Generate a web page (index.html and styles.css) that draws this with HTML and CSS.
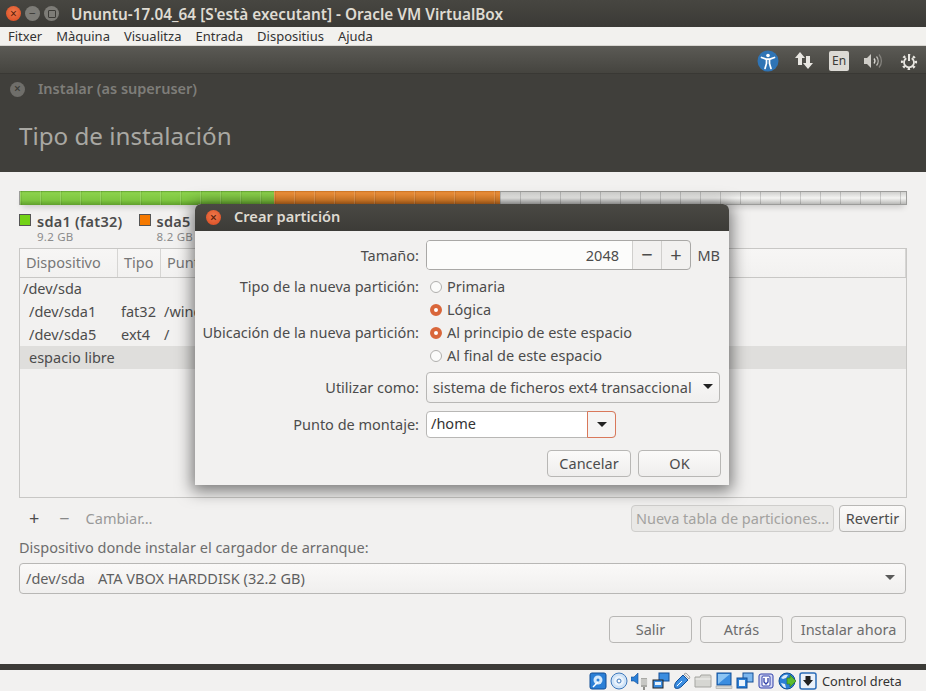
FILE: index.html
```html
<!DOCTYPE html>
<html lang="es">
<head>
    <meta charset="UTF-8">
    <title>Ununtu-17.04_64 [S'està executant] - Oracle VM VirtualBox</title>
    <link rel="stylesheet" href="styles.css">
</head>
<body>

<div class="titlebar">
    <span class="wbtn wbtn-close">&times;</span>
    <span class="wbtn wbtn-min">&minus;</span>
    <span class="wbtn wbtn-max"><i></i></span>
    <span class="titlebar-text">Ununtu-17.04_64 [S'està executant] - Oracle VM VirtualBox</span>
</div>

<div class="menubar">
    <span>Fitxer</span>
    <span>Màquina</span>
    <span>Visualitza</span>
    <span>Entrada</span>
    <span>Dispositius</span>
    <span>Ajuda</span>
</div>

<div class="panel">
    <svg class="ind" width="22" height="22" viewBox="0 0 22 22">
        <circle cx="11" cy="11" r="10.5" fill="#2f74b5"/>
        <circle cx="11" cy="5.5" r="1.8" fill="#fff"/>
        <path d="M4.5 7.5l4.5 1.6h4l4.500-1.600M9.500 9v4.500l-1.500 5M12.500 9v4.500l1.500 5" fill="none" stroke="#fff" stroke-width="1.700" stroke-linecap="round"/>
    </svg>
    <svg class="ind ind-net" width="18" height="19" viewBox="0 0 18 19">
        <path d="M5 1l5 6H7v7H3V7H0zM13 18l5-6h-3V5h-4v7H8z" fill="#e8e6e1"/>
    </svg>
    <span class="ind ind-lang">En</span>
    <svg class="ind ind-vol" width="20" height="16" viewBox="0 0 20 16">
        <path d="M1 5h3l4-4v14l-4-4H1z" fill="#cfcdc8"/>
        <path d="M11 5.500a4 4 0 0 1 0 5" fill="none" stroke="#dad8d3" stroke-width="1.300"/>
        <path d="M13.500 3.500a7 7 0 0 1 0 9" fill="none" stroke="#bdbbb6" stroke-width="1.300"/>
        <path d="M16 1.500a10 10 0 0 1 0 13" fill="none" stroke="#85837e" stroke-width="1.300"/>
    </svg>
    <svg class="ind ind-gear" width="18" height="18" viewBox="0 0 18 18">
        <circle cx="9" cy="10" r="6.900" fill="none" stroke="#e8e6e1" stroke-width="2.400" stroke-dasharray="2.400 3.020" stroke-dashoffset="1.200" transform="rotate(-90 9 10)"/>
        <path d="M6.300 6.200a5 5 0 1 0 5.400 0" fill="none" stroke="#e8e6e1" stroke-width="1.800"/>
        <path d="M9 2v7" stroke="#e8e6e1" stroke-width="2"/>
    </svg>
</div>

<div class="inst-header">
    <div class="inst-caption">
        <span class="inst-close">&times;</span>
        <span class="inst-name">Instalar (as superuser)</span>
    </div>
    <h1>Tipo de instalación</h1>
</div>

<div class="main">
    <div class="diskbar">
        <div class="seg seg-green"></div>
        <div class="seg seg-orange"></div>
        <div class="seg seg-free"></div>
    </div>

    <div class="legend">
        <div class="legend-item">
            <span class="swatch swatch-green"></span>
            <div><b>sda1 (fat32)</b><small>9.2 GB</small></div>
        </div>
        <div class="legend-item">
            <span class="swatch swatch-orange"></span>
            <div><b>sda5</b><small>8.2 GB</small></div>
        </div>
    </div>

    <div class="parts">
        <div class="parts-head">
            <span>Dispositivo</span>
            <span>Tipo</span>
            <span>Punto de montaje</span>
        </div>
        <div class="parts-row first-row"><span class="dev-root">/dev/sda</span><span></span><span></span></div>
        <div class="parts-row"><span>/dev/sda1</span><span>fat32</span><span>/windows</span></div>
        <div class="parts-row"><span>/dev/sda5</span><span>ext4</span><span>/</span></div>
        <div class="parts-row selected"><span>espacio libre</span><span></span><span></span></div>
    </div>

    <div class="tools">
        <span class="tool-plus">+</span>
        <span class="tool-minus">&minus;</span>
        <span class="tool-change">Cambiar…</span>
        <button class="btn btn-disabled btn-table">Nueva tabla de particiones...</button>
        <button class="btn btn-revert">Revertir</button>
    </div>

    <div class="boot-label">Dispositivo donde instalar el cargador de arranque:</div>
    <div class="combo boot-combo">
        <span>/dev/sda<span class="boot-disk">ATA VBOX HARDDISK (32.2 GB)</span></span>
        <i class="arrow arrow-dim"></i>
    </div>

    <div class="actions">
        <button class="btn btn-action">Salir</button>
        <button class="btn btn-action">Atrás</button>
        <button class="btn btn-install">Instalar ahora</button>
    </div>
</div>

<div class="band"></div>

<div class="statusbar">
    <svg width="18" height="18" viewBox="0 0 18 18"><rect x="1" y="1" width="16" height="16" rx="2" fill="#2b7fd6" stroke="#124e96"/><circle cx="9" cy="8" r="4.500" fill="#d3e8fb"/><circle cx="9" cy="8" r="1.500" fill="#2b7fd6"/><path d="M4 15l5-5" stroke="#fff" stroke-width="1.500"/></svg>
    <svg width="18" height="18" viewBox="0 0 18 18"><circle cx="9" cy="9" r="8" fill="#cfe3f7" stroke="#3e78bb"/><circle cx="9" cy="9" r="5" fill="#eaf3fc"/><circle cx="9" cy="9" r="2" fill="#fff" stroke="#3e78bb"/></svg>
    <svg width="18" height="18" viewBox="0 0 18 18"><path d="M0 5h3l4-4v11l-4-3H0z" fill="#2b7fd6" stroke="#124e96" stroke-width=".6"/><rect x="10" y="6" width="6" height="9" fill="#a9a9a5"/><path d="M9 8h8M9 10h8M9 12h8" stroke="#e5e5e2"/><rect x="12" y="15" width="2" height="3" fill="#8f8f8b"/></svg>
    <svg width="18" height="18" viewBox="0 0 18 18"><rect x="7" y="1" width="10" height="8" fill="#3b8de0" stroke="#124e96"/><rect x="1" y="8" width="10" height="8" fill="#3b8de0" stroke="#222"/><rect x="3" y="10" width="6" height="3" fill="#e8f2fb"/></svg>
    <svg width="18" height="18" viewBox="0 0 18 18"><path d="M2 16c-1-3 0-5 2-7l6-6 5 5-6 6c-2 2-4 3-7 2z" fill="#3b8de0" stroke="#124e96"/><path d="M11 2l2-1 4 4-1 2z" fill="#e8e8e8" stroke="#777" stroke-width=".6"/><path d="M4 14l5-5" stroke="#fff"/></svg>
    <svg width="18" height="18" viewBox="0 0 18 18"><path d="M1 5h5l1-2h9a1 1 0 0 1 1 1v11H1z" fill="#d6d6d2" stroke="#a5a5a1"/><path d="M1.500 7h15" stroke="#f2f2f0"/></svg>
    <svg width="18" height="18" viewBox="0 0 18 18"><rect x="2" y="1" width="14" height="12" fill="#3b8de0" stroke="#124e96"/><path d="M3 12V2h12z" fill="#8cc4f3"/><rect x="1" y="14" width="16" height="2.500" fill="#d9d9d6" stroke="#9a9a96" stroke-width=".5"/></svg>
    <svg width="18" height="18" viewBox="0 0 18 18"><rect x="7" y="1" width="10" height="9" fill="#7db7ee" stroke="#124e96"/><rect x="1" y="6" width="10" height="10" fill="#2b7fd6" stroke="#124e96"/><rect x="3" y="8" width="6" height="6" fill="#eaf3fc"/></svg>
    <svg width="18" height="18" viewBox="0 0 18 18"><rect x="2" y="2" width="14" height="14" rx="2" fill="#d6d9f5" stroke="#2f3fa8"/><rect x="5" y="4" width="8" height="10" rx="1" fill="#fff" stroke="#2f3fa8"/><path d="M7 6v4l2 2 2-2V6" fill="none" stroke="#2f3fa8" stroke-width="1.300"/></svg>
    <svg width="18" height="18" viewBox="0 0 18 18"><circle cx="9" cy="9" r="8" fill="#2b7fd6" stroke="#124e96"/><path d="M3 6c2-3 5-4 7-3l-2 3-3 1zM3 11l4 1 1 4c-2 0-4-2-5-5z" fill="#dbeaf8"/><path d="M9 6h3V3l6 6-6 6v-3H9z" fill="#5dbb2e" stroke="#2f7a10" stroke-width=".6"/></svg>
    <svg width="18" height="18" viewBox="0 0 18 18"><rect x="1" y="1" width="16" height="16" rx="2" fill="#eaf1fa" stroke="#2b6cb8" stroke-width="1.500"/><path d="M6.500 4h5v4H14l-5 6-5-6h2.500z" fill="#222"/></svg>
    <span class="status-text">Control dreta</span>
</div>

<!-- Dialogo por encima de la ventana -->
<div class="dialog">
    <div class="dialog-title">
        <span class="wbtn wbtn-close">&times;</span>
        <span class="dialog-name">Crear partición</span>
    </div>
    <div class="form">
        <label class="lbl-size">Tamaño:</label>
        <div class="size-row">
            <div class="spin">
                <span class="spin-value">2048</span>
                <span class="spin-btn">&minus;</span>
                <span class="spin-btn">+</span>
            </div>
            <span>MB</span>
        </div>

        <label class="lbl-radio">Tipo de la nueva partición:</label>
        <div class="radio"><i></i><span>Primaria</span></div>
        <label></label>
        <div class="radio on"><i></i><span>Lógica</span></div>
        <label class="lbl-radio">Ubicación de la nueva partición:</label>
        <div class="radio on"><i></i><span>Al principio de este espacio</span></div>
        <label></label>
        <div class="radio"><i></i><span>Al final de este espacio</span></div>

        <label class="lbl-use">Utilizar como:</label>
        <div class="combo use-combo">
            <span>sistema de ficheros ext4 transaccional</span>
            <i class="arrow"></i>
        </div>

        <label class="lbl-mount">Punto de montaje:</label>
        <div class="mount">
            <span class="mount-value">/home</span>
            <span class="mount-btn"><i class="arrow"></i></span>
        </div>
    </div>
    <div class="dialog-actions">
        <button class="btn btn-dlg">Cancelar</button>
        <button class="btn btn-dlg btn-ok">OK</button>
    </div>
</div>

</body>
</html>
```

FILE: styles.css
```css
html, body {
    margin: 0;
    padding: 0;
}
body {
    width: 926px;
    height: 691px;
    overflow: hidden;
    position: relative;
    font-family: "Noto Sans", sans-serif;
    font-size: 14.5px;
    color: #4c4c4c;
    background-color: #f2f1f0;
}
.titlebar {
    height: 27px;
    box-sizing: border-box;
    padding-left: 6px;
    display: flex;
    align-items: center;
    background: linear-gradient(#474641, #3b3a36);
    color: #dfdbd2;
}
.wbtn {
    width: 15px;
    height: 15px;
    border-radius: 50%;
    margin-right: 4px;
    font-size: 12px;
    line-height: 15px;
    text-align: center;
    color: #3c3b37;
    background-color: #7d7c77;
    flex: none;
}
.wbtn-close {
    background: radial-gradient(circle at 50% 40%, #f07a4c, #d8481f);
    color: #5a200c;
}
.wbtn-max i {
    display: block;
    width: 6px;
    height: 6px;
    margin: 4px auto 0;
    border: 1px solid #3c3b37;
    border-radius: 1px;
}
.titlebar-text {
    margin-left: 8px;
    font-weight: 600;
    font-size: 15.35px;
}
.menubar {
    height: 18px;
    box-sizing: border-box;
    padding-left: 8px;
    display: flex;
    gap: 14px;
    align-items: center;
    background-color: #f2f1ee;
    color: #333;
    font-size: 13px;
}
.panel {
    height: 28px;
    box-sizing: border-box;
    border-top: 1px solid #d8d6d1;
    padding-top: 2px;
    padding-right: 8px;
    display: flex;
    align-items: center;
    justify-content: flex-end;
    background: linear-gradient(#5b5a55, #45443f);
}
.ind {
    flex: none;
}
.ind-net {
    margin-left: 16px;
}
.ind-lang {
    margin-left: 16px;
    width: 20px;
    height: 20px;
    line-height: 20px;
    border-radius: 2px;
    text-align: center;
    font-size: 12px;
    background-color: #dcdad5;
    color: #3c3b37;
}
.ind-vol {
    margin-left: 14px;
}
.ind-gear {
    margin-left: 17px;
}
.inst-header {
    height: 99px;
    box-sizing: border-box;
    border-top: 1px solid #393834;
    background-color: #403f3b;
}
.inst-caption {
    height: 30px;
    padding-left: 10px;
    display: flex;
    align-items: center;
    gap: 13px;
    font-weight: 600;
    font-size: 14.5px;
    color: #7e7d79;
}
.inst-name {
    margin-bottom: 2px;
}
.inst-close {
    width: 15px;
    height: 15px;
    border-radius: 50%;
    line-height: 14px;
    text-align: center;
    font-size: 12px;
    background-color: #6f6e6a;
    color: #3c3b37;
}
.inst-header h1 {
    margin: 18px 0 0 19px;
    font-size: 24.2px;
    font-weight: 400;
    color: #a9a8a3;
    line-height: 28px;
}
.main {
    height: 492px;
    box-sizing: border-box;
    padding: 19px 19px 0;
}
.diskbar {
    width: 888px;
    height: 14px;
    display: flex;
    box-sizing: border-box;
    border: 1px solid #9c9c9a;
    box-shadow: 0 5px 6px -3px rgba(0, 0, 0, .18);
}
.seg {
    height: 100%;
}
.seg-green {
    width: 254px;
    margin: -1px 0;
    height: 14px;
    background-image: repeating-linear-gradient(90deg, rgba(255, 255, 255, .16) 0 1px, rgba(0, 0, 0, .08) 1px 2px, transparent 2px 20px), linear-gradient(#5f9e2e, #8cd24c 12%, #7ec640 65%, #5f9f2c);
}
.seg-orange {
    width: 226px;
    margin: -1px 0;
    height: 14px;
    background-image: repeating-linear-gradient(90deg, rgba(255, 255, 255, .16) 0 1px, rgba(0, 0, 0, .08) 1px 2px, transparent 2px 20px), linear-gradient(#c9711f, #f0913a 12%, #e5852b 65%, #b8641c);
}
.seg-free {
    flex: 1;
    background-image: repeating-linear-gradient(90deg, rgba(0, 0, 0, .16) 0 1px, transparent 1px 20px), linear-gradient(#cfcfcd, #f4f4f2 50%, #b9b9b7);
}
.legend {
    display: flex;
    gap: 16px;
    margin-top: 8px;
    height: 35px;
}
.legend-item {
    display: flex;
    gap: 6px;
}
.legend-item b {
    display: block;
    line-height: 16px;
    font-weight: 600;
    font-size: 14.5px;
    letter-spacing: .25px;
    color: #4c4c4c;
}
.legend-item small {
    display: block;
    line-height: 15px;
    font-size: 11.5px;
    letter-spacing: .25px;
    color: #8b8b8b;
}
.swatch {
    width: 10px;
    height: 10px;
    margin-top: 1px;
    border: 1px solid #555;
}
.swatch-green {
    background-color: #73d216;
}
.swatch-orange {
    background-color: #f57900;
}
.parts {
    height: 250px;
    box-sizing: border-box;
    border: 1px solid #c8c7c5;
    background-color: #f2f1f0;
}
.parts-head {
    height: 28px;
    display: grid;
    grid-template-columns: 98px 43px 1fr;
    border-bottom: 1px solid #c8c7c5;
    background: linear-gradient(#f7f6f5, #f2f1f0);
    color: #777;
    line-height: 27px;
}
.parts-head span {
    padding-left: 6px;
    border-right: 1px solid #d6d5d3;
}
.parts-row {
    height: 23px;
    display: grid;
    grid-template-columns: 98px 43px 1fr;
    line-height: 23px;
}
.first-row {
    margin-top: -1px;
}
.parts-row span {
    padding-left: 3px;
}
.parts-row span:first-child {
    padding-left: 9px;
}
.parts-row span.dev-root {
    padding-left: 3px;
}
.selected {
    background-color: #dfdedc;
}
.tools {
    height: 27px;
    margin-top: 7px;
    display: flex;
    align-items: center;
    color: #4c4c4c;
}
.tool-plus {
    margin-left: 10px;
    margin-bottom: 2px;
    font-size: 18px;
}
.tool-minus {
    margin-left: 20px;
    margin-bottom: 2px;
    font-size: 18px;
    color: #888;
}
.tool-change {
    margin-left: 16px;
    margin-bottom: 2px;
    color: #999;
}
.btn {
    box-sizing: border-box;
    height: 27px;
    padding: 0 0 2px;
    font-family: inherit;
    font-size: 14.5px;
    color: #4c4c4c;
    border: 1px solid #b8b7b5;
    border-radius: 4px;
    background: linear-gradient(#fbfaf9, #efeeed);
}
.btn-disabled {
    background: #e9e8e6;
    color: #a3a29f;
    border-color: #cfcecc;
}
.btn-table {
    width: 203px;
    margin-left: auto;
}
.btn-revert {
    width: 67px;
    margin-left: 5px;
    margin-right: 1px;
}
.boot-label {
    margin-top: 5px;
    line-height: 20px;
    color: #6d6d6d;
}
.combo {
    display: flex;
    align-items: center;
    justify-content: space-between;
    box-sizing: border-box;
    border: 1px solid #b8b7b5;
    border-radius: 4px;
    padding-bottom: 2px;
    background: linear-gradient(#faf9f8, #f0efee);
}
.boot-combo {
    width: 887px;
    height: 31px;
    margin-top: 6px;
    padding-left: 6px;
    padding-right: 10px;
    color: #5f5f5f;
}
.boot-disk {
    margin-left: 13px;
}
.arrow {
    width: 0;
    height: 0;
    border-left: 5px solid transparent;
    border-right: 5px solid transparent;
    border-top: 5px solid #222;
}
.arrow-dim {
    border-top-color: #5a5a5a;
}
.actions {
    display: flex;
    justify-content: flex-end;
    gap: 8px;
    margin: 22px 0 0;
    width: 887px;
}
.btn-action {
    width: 83px;
    background: #f2f1f0;
    color: #6d6d6d;
}
.btn-install {
    width: 115px;
    background: #f2f1f0;
    color: #6d6d6d;
}
.band {
    height: 6px;
    background-color: #3c3b37;
}
.statusbar {
    height: 21px;
    box-sizing: border-box;
    padding-left: 589px;
    display: flex;
    align-items: center;
    gap: 3px;
    background-color: #f2f1f0;
}
.status-text {
    margin-left: 2px;
    font-size: 12.8px;
    color: #333;
    white-space: nowrap;
}
.dialog {
    position: absolute;
    left: 195px;
    top: 204px;
    width: 534px;
    height: 281px;
    border-radius: 6px 6px 0 0;
    background-color: #f2f1f0;
    box-shadow: 0 3px 16px 3px rgba(0, 0, 0, .5);
}
.dialog-title {
    height: 27px;
    padding-left: 11px;
    display: flex;
    align-items: center;
    gap: 9px;
    border-radius: 6px 6px 0 0;
    background: linear-gradient(#4a4944, #3c3b37);
    color: #dfdbd2;
    font-weight: 600;
    font-size: 14.6px;
}
.dialog-name {
    margin-bottom: 3px;
}
.form {
    display: grid;
    grid-template-columns: 224px 294px;
    column-gap: 7px;
    align-items: center;
    padding-top: 9px;
}
.form label {
    text-align: right;
    color: #4c4c4c;
}
.form .lbl-size {
    margin-bottom: 5px;
}
.form .lbl-radio {
    margin-bottom: 2px;
}
.form .lbl-use {
    margin-top: 3px;
}
.form .lbl-mount {
    margin-top: 6px;
}
.size-row {
    height: 30px;
    display: flex;
    justify-content: space-between;
    align-items: center;
    margin-bottom: 5px;
}
.spin {
    width: 265px;
    height: 100%;
    display: flex;
    box-sizing: border-box;
    border: 1px solid #a9a8a6;
    border-radius: 4px;
    line-height: 28px;
    background-color: #f2f1f0;
}
.spin-value {
    flex: 1;
    padding-right: 13px;
    text-align: right;
    border-radius: 3px 0 0 3px;
    background-color: #fcfcfb;
}
.spin-btn {
    width: 28px;
    text-align: center;
    font-size: 20px;
    border-left: 1px solid #d0cfcd;
}
.radio {
    height: 23px;
    padding-left: 4px;
    display: flex;
    align-items: center;
    gap: 5px;
}
.radio span {
    margin-bottom: 2px;
}
.radio i {
    width: 10px;
    height: 10px;
    border: 1px solid #b0afad;
    border-radius: 50%;
    background-color: #fbfbfa;
}
.radio.on i {
    width: 4px;
    height: 4px;
    border: 4px solid #d9663a;
    background-color: #fff;
}
.use-combo {
    height: 31px;
    margin-top: 5px;
    padding-left: 6px;
    padding-right: 6px;
}
.mount {
    width: 190px;
    height: 27px;
    margin-top: 8px;
    display: flex;
    box-sizing: border-box;
    border: 1px solid #b8b7b5;
    border-radius: 4px;
    background-color: #fff;
    line-height: 23px;
}
.mount-value {
    flex: 1;
    padding-left: 4px;
    color: #333;
}
.mount-btn {
    width: 27px;
    margin: -1px -1px -1px 0;
    display: flex;
    align-items: center;
    justify-content: center;
    border: 1px solid #d9785a;
    border-radius: 0 4px 4px 0;
    background: #f5f4f3;
}
.dialog-actions {
    display: flex;
    justify-content: flex-end;
    gap: 7px;
    margin-top: 12px;
    padding-right: 8px;
}
.btn-dlg {
    width: 84px;
}
.btn-ok {
    width: 83px;
}
```
